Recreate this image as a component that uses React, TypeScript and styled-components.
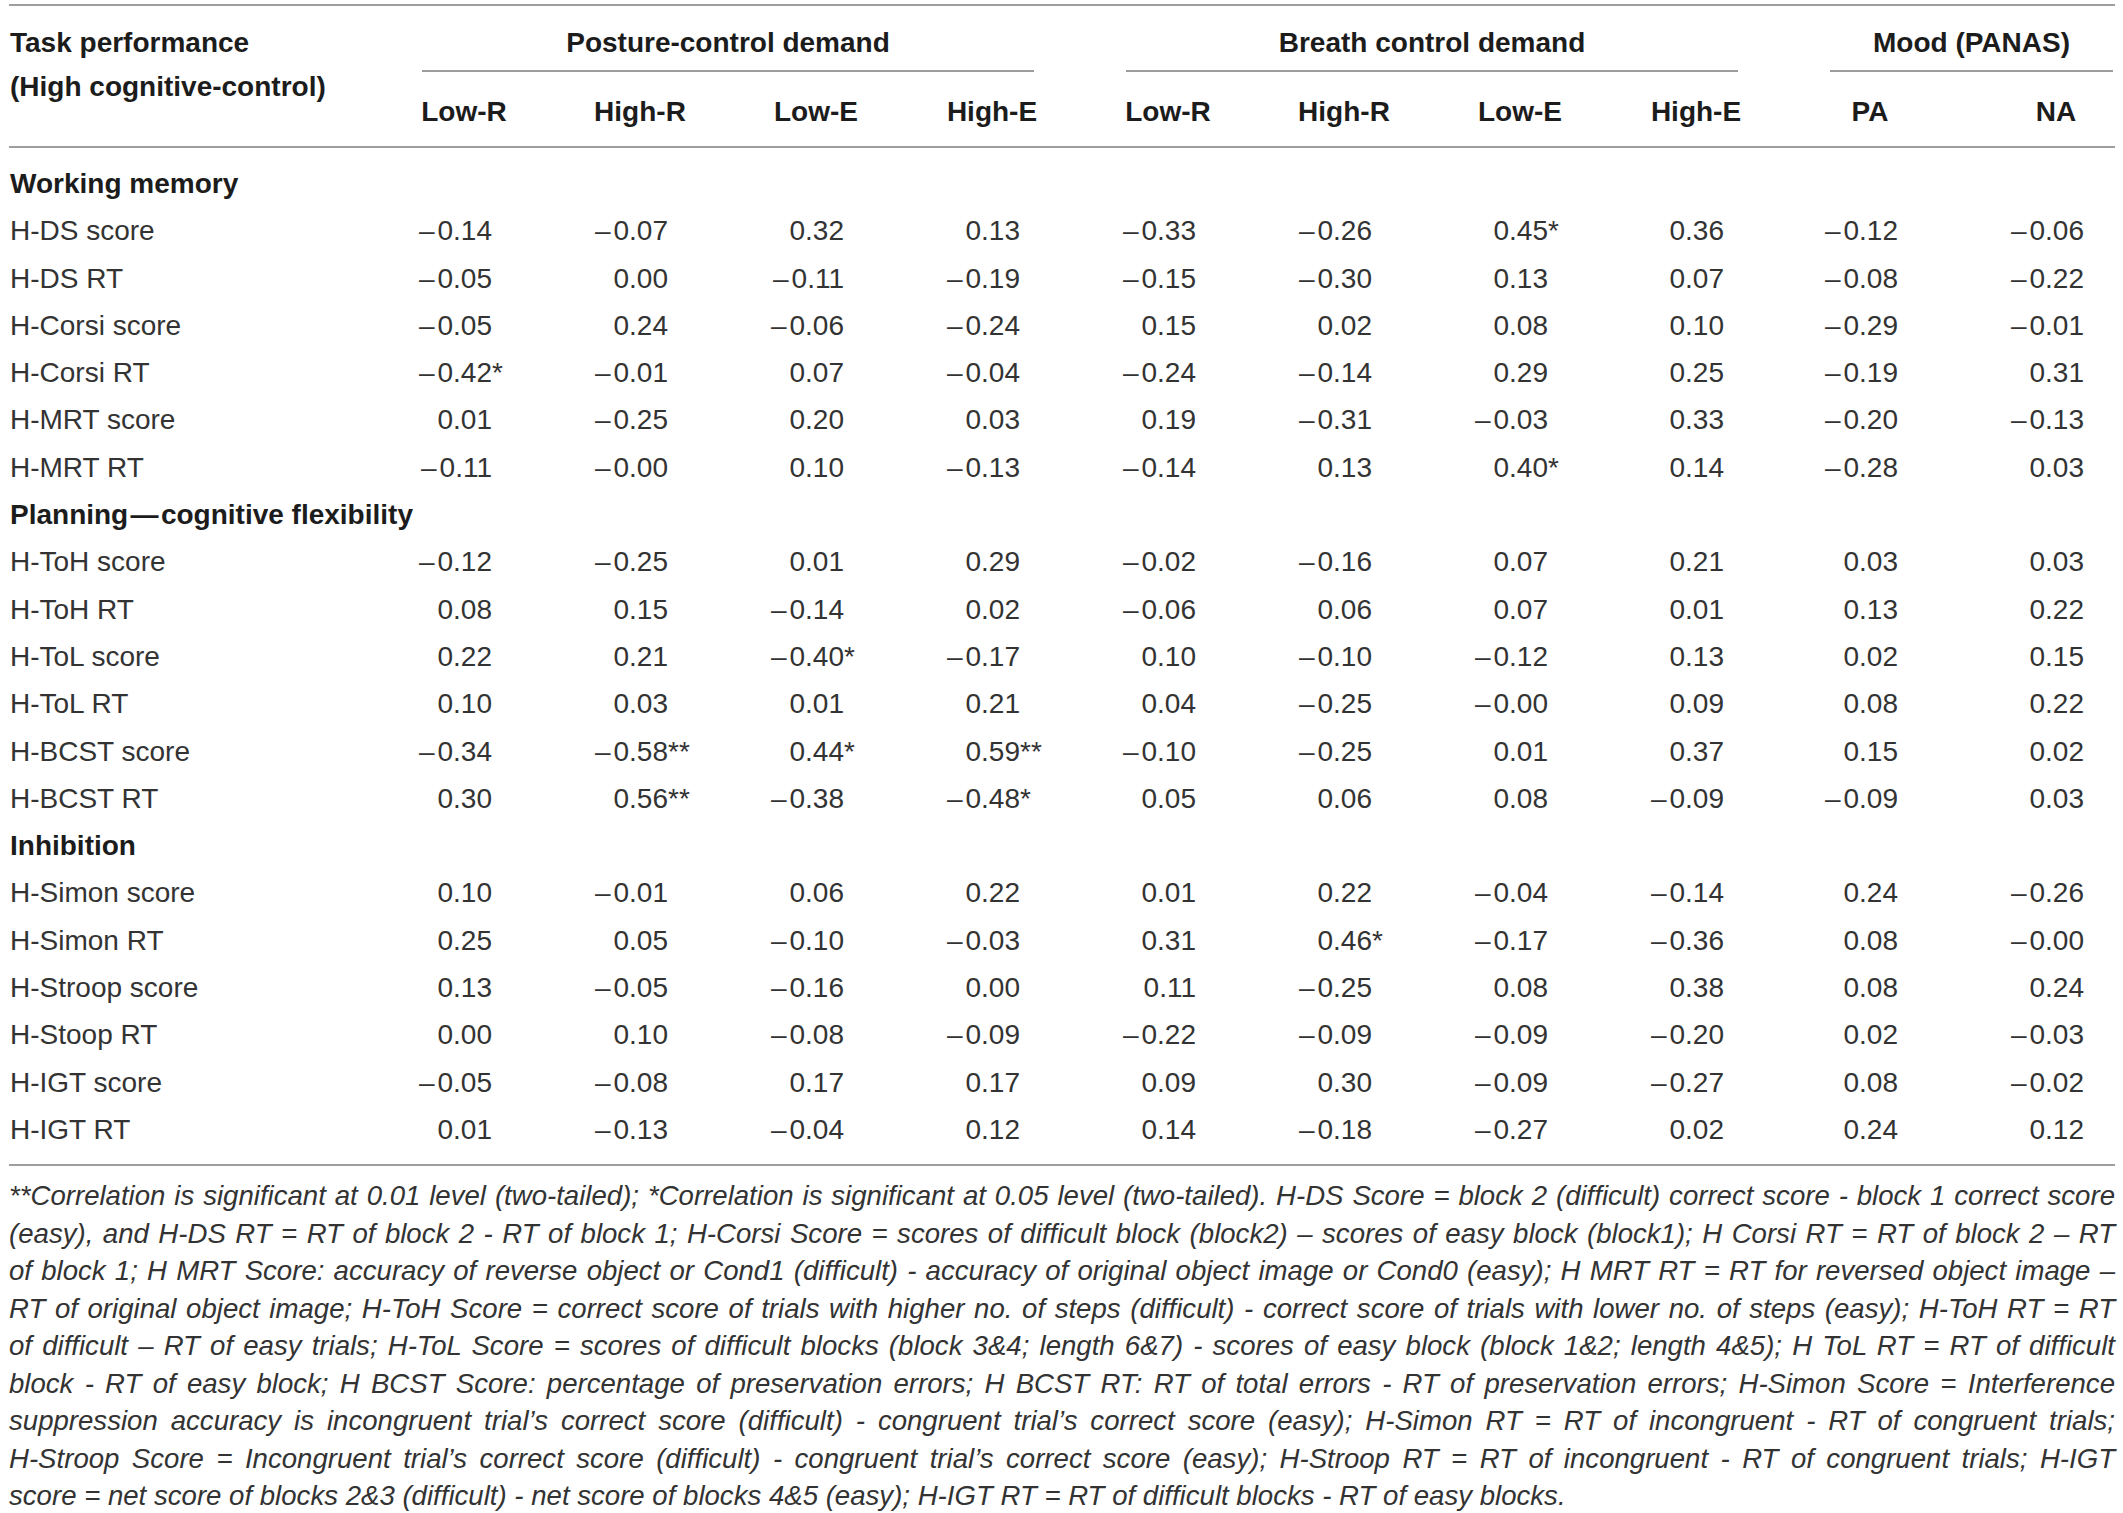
import React from "react";
import { styled, createGlobalStyle } from "styled-components";

const GlobalStyle = createGlobalStyle`
  html, body {
    margin: 0;
    padding: 0;
    background: #ffffff;
  }
  body {
    font-family: "Liberation Sans", Arial, Helvetica, sans-serif;
    color: #333333;
  }
`;

const RULE = "2px solid #9d9d9d";
const COLUMNS = "367px repeat(8, 176px) 172px 1fr";

const Page = styled.div`
  width: 2106px;
  padding: 4px 8px 0 9px;
`;

const Table = styled.div`
  border-top: ${RULE};
`;

const Head = styled.div`
  display: grid;
  grid-template-columns: ${COLUMNS};
  grid-template-rows: auto auto;
  border-bottom: ${RULE};
  padding-bottom: 18px;
  font-weight: 700;
  font-size: 28px;
  color: #1c1c1c;
`;

const StubHead = styled.div`
  grid-row: 1 / span 2;
  grid-column: 1;
  padding: 15px 0 0 1px;
  line-height: 44px;
  div {
    white-space: nowrap;
  }
`;

const GroupHead = styled.div<{ $span: number; $flush?: boolean }>`
  grid-row: 1;
  grid-column: span ${(p) => p.$span};
  margin: 0 ${(p) => (p.$flush ? "2px" : "46px")} 0 46px;
  padding: 21px 0 11px;
  line-height: 32px;
  text-align: center;
  white-space: nowrap;
  border-bottom: ${RULE};
`;

const ColHead = styled.div<{ $end?: boolean }>`
  grid-row: 2;
  display: flex;
  justify-content: ${(p) => (p.$end ? "flex-end" : "center")};
  padding: 24px ${(p) => (p.$end ? "7px" : "0")} 0 0;
  line-height: 32px;
  span {
    width: 104px;
    text-align: center;
    white-space: nowrap;
  }
`;

const Body = styled.div`
  padding: 12px 0 11px;
  border-bottom: ${RULE};
`;

const Row = styled.div`
  display: grid;
  grid-template-columns: ${COLUMNS};
  align-items: center;
  height: 47.3px;
  font-size: 28px;
  line-height: 47.3px;
`;

const SectionTitle = styled.div`
  grid-column: 1 / -1;
  padding-left: 1px;
  font-weight: 700;
  color: #1c1c1c;
  white-space: nowrap;
`;

const RowLabel = styled.div`
  padding-left: 1px;
  white-space: nowrap;
`;

const Cell = styled.div<{ $end?: boolean }>`
  display: flex;
  justify-content: ${(p) => (p.$end ? "flex-end" : "center")};
  padding-right: ${(p) => (p.$end ? "7px" : "0")};
`;

const Num = styled.span`
  width: 80px;
  text-align: right;
  white-space: nowrap;
`;

const Minus = styled.span`
  margin-right: 3px;
`;

const Star = styled.span`
  width: 24px;
  text-align: left;
`;

const Footnote = styled.div`
  padding-top: 11px;
  font-size: 27.6px;
  line-height: 37.5px;
  font-style: italic;
  color: #333333;
`;

const NoteLine = styled.div<{ $last?: boolean }>`
  text-align: justify;
  text-align-last: ${(p) => (p.$last ? "left" : "justify")};
`;

interface Section {
  title: string;
  rows: [string, string[]][];
}

const groups = [
  { label: "Posture-control demand", span: 4 },
  { label: "Breath control demand", span: 4 },
  { label: "Mood (PANAS)", span: 2, flush: true },
];

const subHeads = ["Low-R", "High-R", "Low-E", "High-E", "Low-R", "High-R", "Low-E", "High-E", "PA", "NA"];

const sections: Section[] = [
  {
    title: "Working memory",
    rows: [
      ["H-DS score", ["-0.14", "-0.07", "0.32", "0.13", "-0.33", "-0.26", "0.45*", "0.36", "-0.12", "-0.06"]],
      ["H-DS RT", ["-0.05", "0.00", "-0.11", "-0.19", "-0.15", "-0.30", "0.13", "0.07", "-0.08", "-0.22"]],
      ["H-Corsi score", ["-0.05", "0.24", "-0.06", "-0.24", "0.15", "0.02", "0.08", "0.10", "-0.29", "-0.01"]],
      ["H-Corsi RT", ["-0.42*", "-0.01", "0.07", "-0.04", "-0.24", "-0.14", "0.29", "0.25", "-0.19", "0.31"]],
      ["H-MRT score", ["0.01", "-0.25", "0.20", "0.03", "0.19", "-0.31", "-0.03", "0.33", "-0.20", "-0.13"]],
      ["H-MRT RT", ["-0.11", "-0.00", "0.10", "-0.13", "-0.14", "0.13", "0.40*", "0.14", "-0.28", "0.03"]],
    ],
  },
  {
    title: "Planning\u200a\u2014\u200acognitive flexibility",
    rows: [
      ["H-ToH score", ["-0.12", "-0.25", "0.01", "0.29", "-0.02", "-0.16", "0.07", "0.21", "0.03", "0.03"]],
      ["H-ToH RT", ["0.08", "0.15", "-0.14", "0.02", "-0.06", "0.06", "0.07", "0.01", "0.13", "0.22"]],
      ["H-ToL score", ["0.22", "0.21", "-0.40*", "-0.17", "0.10", "-0.10", "-0.12", "0.13", "0.02", "0.15"]],
      ["H-ToL RT", ["0.10", "0.03", "0.01", "0.21", "0.04", "-0.25", "-0.00", "0.09", "0.08", "0.22"]],
      ["H-BCST score", ["-0.34", "-0.58**", "0.44*", "0.59**", "-0.10", "-0.25", "0.01", "0.37", "0.15", "0.02"]],
      ["H-BCST RT", ["0.30", "0.56**", "-0.38", "-0.48*", "0.05", "0.06", "0.08", "-0.09", "-0.09", "0.03"]],
    ],
  },
  {
    title: "Inhibition",
    rows: [
      ["H-Simon score", ["0.10", "-0.01", "0.06", "0.22", "0.01", "0.22", "-0.04", "-0.14", "0.24", "-0.26"]],
      ["H-Simon RT", ["0.25", "0.05", "-0.10", "-0.03", "0.31", "0.46*", "-0.17", "-0.36", "0.08", "-0.00"]],
      ["H-Stroop score", ["0.13", "-0.05", "-0.16", "0.00", "0.11", "-0.25", "0.08", "0.38", "0.08", "0.24"]],
      ["H-Stoop RT", ["0.00", "0.10", "-0.08", "-0.09", "-0.22", "-0.09", "-0.09", "-0.20", "0.02", "-0.03"]],
      ["H-IGT score", ["-0.05", "-0.08", "0.17", "0.17", "0.09", "0.30", "-0.09", "-0.27", "0.08", "-0.02"]],
      ["H-IGT RT", ["0.01", "-0.13", "-0.04", "0.12", "0.14", "-0.18", "-0.27", "0.02", "0.24", "0.12"]],
    ],
  },
];

const noteLines = [
  "**Correlation is significant at 0.01 level (two-tailed); *Correlation is significant at 0.05 level (two-tailed). H-DS Score = block 2 (difficult) correct score - block 1 correct score",
  "(easy), and H-DS RT = RT of block 2 - RT of block 1; H-Corsi Score = scores of difficult block (block2) \u2013 scores of easy block (block1); H Corsi RT = RT of block 2 \u2013 RT",
  "of block 1; H MRT Score: accuracy of reverse object or Cond1 (difficult) - accuracy of original object image or Cond0 (easy); H MRT RT = RT for reversed object image \u2013",
  "RT of original object image; H-ToH Score = correct score of trials with higher no. of steps (difficult) - correct score of trials with lower no. of steps (easy); H-ToH RT = RT",
  "of difficult \u2013 RT of easy trials; H-ToL Score = scores of difficult blocks (block 3&4; length 6&7) - scores of easy block (block 1&2; length 4&5); H ToL RT = RT of difficult",
  "block - RT of easy block; H BCST Score: percentage of preservation errors; H BCST RT: RT of total errors - RT of preservation errors; H-Simon Score = Interference",
  "suppression accuracy is incongruent trial\u2019s correct score (difficult) - congruent trial\u2019s correct score (easy); H-Simon RT = RT of incongruent - RT of congruent trials;",
  "H-Stroop Score = Incongruent trial\u2019s correct score (difficult) - congruent trial\u2019s correct score (easy); H-Stroop RT = RT of incongruent - RT of congruent trials; H-IGT",
  "score = net score of blocks 2&3 (difficult) - net score of blocks 4&5 (easy); H-IGT RT = RT of difficult blocks - RT of easy blocks.",
];

function Value({ raw, end }: { raw: string; end?: boolean }) {
  const stars = raw.match(/\*+$/)?.[0] ?? "";
  const body = raw.replace(/\*+$/, "");
  const negative = body.startsWith("-");
  return (
    <Cell $end={end}>
      <Num>
        {negative && <Minus>{"\u2013"}</Minus>}
        {negative ? body.slice(1) : body}
      </Num>
      <Star>{stars}</Star>
    </Cell>
  );
}

export default function App() {
  return (
    <Page>
      <GlobalStyle />
      <Table>
        <Head>
          <StubHead>
            <div>Task performance</div>
            <div>(High cognitive-control)</div>
          </StubHead>
          {groups.map((g) => (
            <GroupHead key={g.label} $span={g.span} $flush={g.flush}>
              {g.label}
            </GroupHead>
          ))}
          {subHeads.map((h, i) => (
            <ColHead key={i} $end={i === subHeads.length - 1}>
              <span>{h}</span>
            </ColHead>
          ))}
        </Head>
        <Body>
          {sections.map((s) => (
            <React.Fragment key={s.title}>
              <Row>
                <SectionTitle>{s.title}</SectionTitle>
              </Row>
              {s.rows.map(([label, values]) => (
                <Row key={label}>
                  <RowLabel>{label}</RowLabel>
                  {values.map((v, i) => (
                    <Value key={i} raw={v} end={i === values.length - 1} />
                  ))}
                </Row>
              ))}
            </React.Fragment>
          ))}
        </Body>
      </Table>
      <Footnote>
        {noteLines.map((line, i) => (
          <NoteLine key={i} $last={i === noteLines.length - 1}>
            {line}
          </NoteLine>
        ))}
      </Footnote>
    </Page>
  );
}
